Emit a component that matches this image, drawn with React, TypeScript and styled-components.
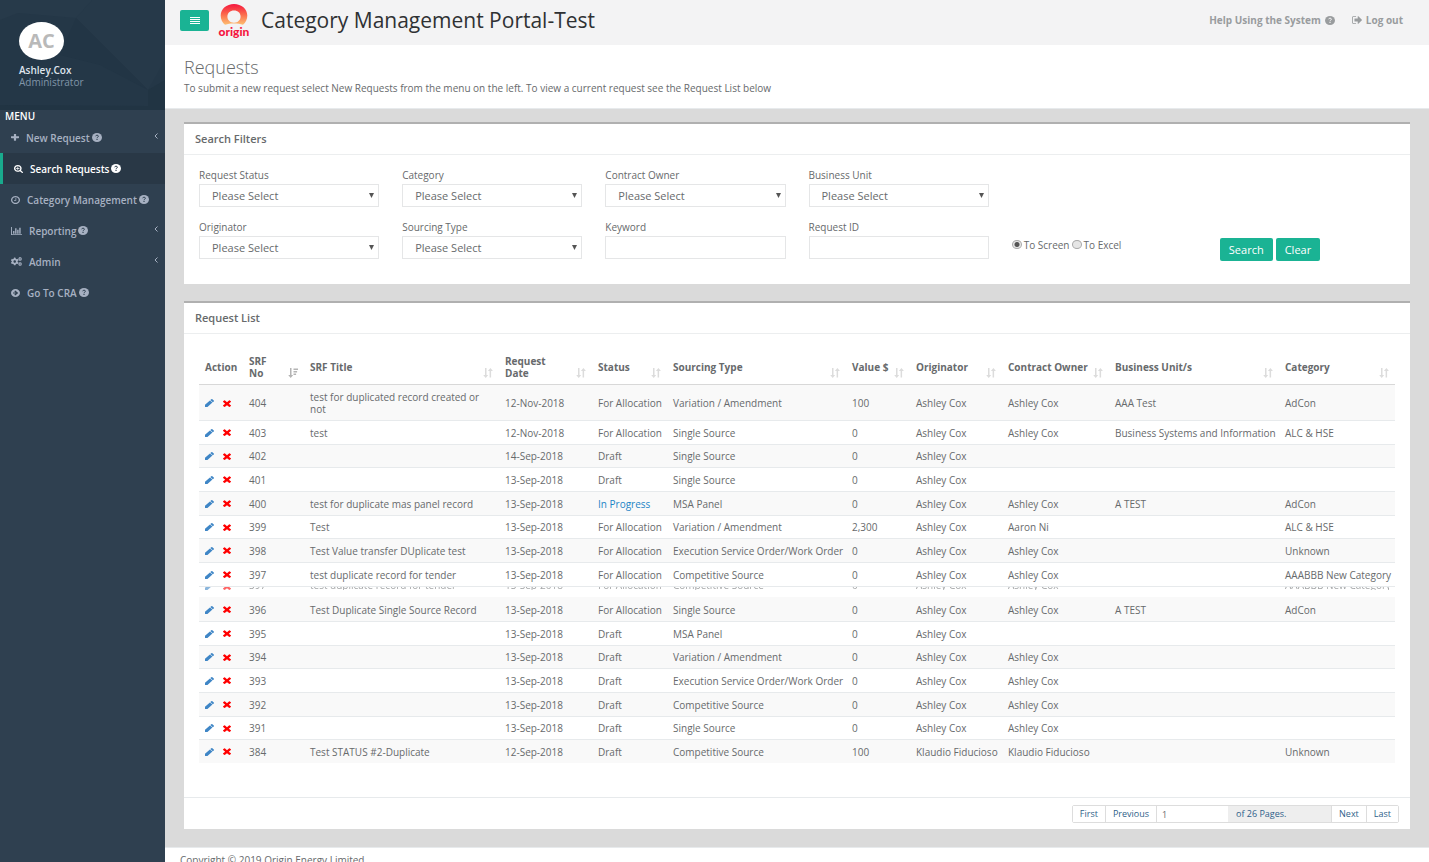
import React from "react";
import styled, { createGlobalStyle, css } from "styled-components";
import { FaCogs } from "react-icons/fa";

const GlobalStyle = createGlobalStyle`
  *, *::before, *::after { box-sizing: border-box; }
  html, body { margin: 0; padding: 0; }
  body {
    font-family: "Open Sans", "Liberation Sans", sans-serif;
    font-size: 11px;
    line-height: 12px;
    color: #676a6c;
    background: #2f4050;
  }
  button, input, select { font-family: inherit; color: inherit; margin: 0; }
  h1, h2, p, ul { margin: 0; padding: 0; }
  a { color: inherit; text-decoration: none; }
`;

/* ---------- icons ---------- */

const CIRCLE =
  "q0 209-103 385.500t-279.500 279.500-385.500 103-385.500-103-279.500-279.500-103-385.500 103-385.500 279.500-279.500 385.500-103 385.500 103 279.500 279.500 103 385.500z";

const paths = {
  plus: "M1600 736v192q0 40-28 68t-68 28h-416v416q0 40-28 68t-68 28h-192q-40 0-68-28t-28-68v-416h-416q-40 0-68-28t-28-68v-192q0-40 28-68t68-28h416v-416q0-40 28-68t68-28h192q40 0 68 28t28 68v416h416q40 0 68 28t28 68z",
  searchPlus:
    "M1088 800v64q0 13-9.500 22.500t-22.500 9.500h-224v224q0 13-9.500 22.500t-22.500 9.500h-64q-13 0-22.500-9.500t-9.500-22.500v-224h-224q-13 0-22.500-9.500t-9.500-22.500v-64q0-13 9.500-22.500t22.500-9.500h224v-224q0-13 9.500-22.500t22.500-9.500h64q13 0 22.500 9.500t9.500 22.500v224h224q13 0 22.500 9.500t9.500 22.500zm128 32q0-185-131.500-316.500t-316.500-131.500-316.500 131.500-131.500 316.500 131.500 316.500 316.500 131.500 316.500-131.500 131.500-316.500zm512 832q0 53-37.500 90.500t-90.500 37.500q-54 0-90-38l-343-342q-179 124-399 124-143 0-273.500-55.500t-225-150-150-225-55.500-273.500 55.500-273.500 150-225 225-150 273.500-55.500 273.500 55.500 225 150 150 225 55.500 273.500q0 220-124 399l343 343q37 37 37 90z",
  clock:
    "M1024 544v448q0 14-9 23t-23 9h-320q-14 0-23-9t-9-23v-64q0-14 9-23t23-9h224v-352q0-14 9-23t23-9h64q14 0 23 9t9 23zm416 352q0-148-73-273t-198-198-273-73-273 73-198 198-73 273 73 273 198 198 273 73 273-73 198-198 73-273zm224 0" +
    CIRCLE,
  chart:
    "M640 896v512h-256v-512h256zm384-512v1024h-256v-1024h256zm1024 1128v152h-2048v-1536h170v1384h1878zm-640-872v768h-256v-768h256zm384-384v1152h-256v-1152h256z",
  signOut:
    "M704 1440q0 4 1 20t.5 26.500-3 23.500-10 19.500-20.500 6.500h-320q-119 0-203.500-84.500t-84.500-203.500v-704q0-119 84.500-203.500t203.500-84.500h320q13 0 22.500 9.500t9.500 22.500q0 4 1 20t.5 26.500-3 23.500-10 19.500-20.500 6.500h-320q-66 0-113 47t-47 113v704q0 66 47 113t113 47h312l11.500 1 11.500 3 8 5.500 7 9 2 13.500zm928-544q0 26-19 45l-544 544q-19 19-45 19t-45-19-19-45v-288h-448q-26 0-45-19t-19-45v-384q0-26 19-45t45-19h448v-288q0-26 19-45t45-19 45 19l544 544q19 19 19 45z",
  pencil:
    "M960 416l416 416-832 832h-416v-416zm683 96q0 53-37 90l-166 166-416-416 166-165q36-38 90-38 53 0 91 38l235 234q37 39 37 91z",
  times:
    "M1490 1322q0 40-28 68l-136 136q-28 28-68 28t-68-28l-294-294-294 294q-28 28-68 28t-68-28l-136-136q-28-28-28-68t28-68l294-294-294-294q-28-28-28-68t28-68l136-136q28-28 68-28t68 28l294 294 294-294q28-28 68-28t68 28l136 136q28 28 28 68t-28 68l-294 294 294 294q28 28 28 68z",
};

type IconName = keyof typeof paths;

const viewBoxes: Record<IconName, string> = {
  chart: "0 128 2048 1536",
  clock: "128 128 1536 1536",
  plus: "192 192 1408 1408",
  searchPlus: "64 128 1664 1664",
  signOut: "64 256 1568 1280",
  pencil: "128 149 1515 1515",
  times: "302 302 1188 1252",
};

const Svg = styled.svg`
  display: block;
  flex: none;
  fill: currentColor;
`;

function Icon({ name, w, h }: { name: IconName; w: number; h: number }) {
  return (
    <Svg width={w} height={h} viewBox={viewBoxes[name]} preserveAspectRatio="none" aria-hidden="true">
      <path d={paths[name]} />
    </Svg>
  );
}

function HelpIcon() {
  return (
    <Svg width={10} height={9} viewBox="0 0 20 18" aria-hidden="true">
      <mask id="help-mark">
        <rect width="20" height="18" fill="#fff" />
        <path d="M7.200 6.500Q8 4.300 10.100 4.300Q12.800 4.500 12.700 6.600Q12.500 8.200 10.800 8.900Q10 9.400 10 10.600" fill="none" stroke="#000" strokeWidth="2" />
        <path d="M8.900 12h2.300v2.200H8.900z" fill="#000" />
      </mask>
      <ellipse cx="10" cy="9" rx="10" ry="9" mask="url(#help-mark)" />
    </Svg>
  );
}

function GoIcon() {
  return (
    <Svg width={9} height={8} viewBox="0 0 18 16" preserveAspectRatio="none" aria-hidden="true">
      <path
        fillRule="evenodd"
        d="M9 0a9 8 0 1 0 0 16a9 8 0 1 0 0-16zM8.500 3l6 5-6 5-2-1.700 2.600-2.200H4V6.900h5.100L6.500 4.700z"
      />
    </Svg>
  );
}

function BarsIcon() {
  return (
    <Svg width={10} height={7} viewBox="0 0 10 7" aria-hidden="true">
      <path d="M0 0h10v1H0zM0 2h10v1H0zM0 4h10v1H0zM0 6h10v1H0z" />
    </Svg>
  );
}

function Chevron() {
  return (
    <Svg width={4} height={6} viewBox="0 0 4 6" aria-hidden="true">
      <path d="M3.500.5L1 3l2.500 2.500" fill="none" stroke="currentColor" strokeWidth="1" />
    </Svg>
  );
}

function SortIcon({ active }: { active?: boolean }) {
  return (
    <Svg width={10} height={10} viewBox="0 0 10 10" aria-hidden="true">
      <path d="M2 0h1.500v7H5.200L2.700 10 .2 7H2z" />
      {active ? (
        <path d="M5.500.5h4.500v1.500H5.500zM5.500 3h3.600v1.500H5.500zM5.500 5.500h2.600v1.500H5.500z" />
      ) : (
        <path d="M6.600 9.500V3H4.900L7.400 0l2.500 3H8.100v6.500z" />
      )}
    </Svg>
  );
}

/* ---------- shell ---------- */

const Shell = styled.div`
  display: grid;
  grid-template-columns: 165px minmax(0, 1fr);
  height: 100vh;
  overflow: hidden;
`;

const Sidebar = styled.nav`
  background: #2f4050;
  color: #a7b1c2;
`;

const Profile = styled.div`
  position: relative;
  height: 110px;
  padding: 22px 19px 0;
  background: #243747;
`;

const Facets = styled.svg`
  position: absolute;
  inset: 0;
  width: 100%;
  height: 100%;
`;

const ProfileBody = styled.div`
  position: relative;
  line-height: 12px;
`;

const Avatar = styled.div`
  display: flex;
  align-items: center;
  justify-content: center;
  width: 45px;
  height: 38px;
  margin-bottom: 4px;
  border-radius: 50%;
  background: #fff;
  color: #b9b9b9;
  font-size: 20px;
  font-weight: 700;
`;

const UserName = styled.div`
  color: #dfe4ed;
  font-size: 10px;
  font-weight: 600;
`;

const UserRole = styled.div`
  color: #8095a8;
  font-size: 10px;
`;

const MenuTitle = styled.div`
  padding-left: 5px;
  color: #fff;
  font-size: 10px;
  font-weight: 600;
`;

const MenuList = styled.ul`
  list-style: none;
`;

const MenuLink = styled.a<{ $active?: boolean }>`
  display: flex;
  align-items: center;
  height: 31px;
  padding: 0 7px 0 11px;
  font-size: 10px;
  font-weight: 600;
  white-space: nowrap;
  ${(p) =>
    p.$active &&
    css`
      border-left: 3px solid #19aa8d;
      background: #293846;
      color: #fff;
    `}
`;

const MenuText = styled.span`
  margin: 0 2px 0 7px;
`;

const MenuArrow = styled.span`
  margin-left: auto;
  padding-bottom: 3px;
`;

const Page = styled.div`
  display: flex;
  flex-direction: column;
  min-width: 0;
  background: #dadada;
`;

const TopBar = styled.header`
  display: flex;
  align-items: center;
  height: 45px;
  padding: 0 26px 5px 15px;
  background: #f3f3f4;
`;

const MenuToggle = styled.button`
  display: flex;
  align-items: center;
  justify-content: center;
  width: 29px;
  height: 21px;
  padding: 0;
  border: 0;
  border-radius: 2px;
  background: #1ab394;
  color: #fff;
`;

const Logo = styled.svg`
  width: 34px;
  height: 38px;
  margin: 4px 10px 0 8px;
`;

const AppTitle = styled.h1`
  color: #2f3133;
  font-size: 21px;
  font-weight: 400;
  line-height: 28px;
  white-space: nowrap;
`;

const TopLinks = styled.div`
  display: flex;
  gap: 17px;
  margin-left: auto;
  color: #999c9e;
  font-size: 10px;
  font-weight: 700;
`;

const TopLink = styled.a`
  display: flex;
  align-items: center;
  gap: 4px;
  white-space: nowrap;
`;

const Heading = styled.section`
  height: 64px;
  padding: 10px 19px 0;
  border-bottom: 1px solid #e7eaec;
  background: #fff;
`;

const HeadingTitle = styled.h2`
  font-size: 18px;
  font-weight: 300;
  line-height: 24px;
`;

const HeadingText = styled.p`
  margin-top: 3px;
  font-size: 10px;
`;

const Content = styled.main`
  display: flex;
  flex-direction: column;
  gap: 17px;
  padding: 13px 19px 18px;
`;

const Panel = styled.section`
  border-top: 2px solid #b0b0b0;
  background: #fff;
`;

const PanelTitle = styled.h2`
  padding: 9px 11px;
  border-bottom: 1px solid #eceeef;
  font-size: 11px;
  font-weight: 600;
  line-height: 12px;
`;

/* ---------- filters ---------- */

const Filters = styled.form`
  display: grid;
  grid-template-columns: repeat(6, minmax(0, 1fr));
  gap: 13px 23px;
  padding: 13px 15px 23px;
`;

const Field = styled.div`
  display: flex;
  flex-direction: column;
  gap: 2px;
  font-size: 10px;
  line-height: 14px;
`;

const controlCss = css`
  width: 100%;
  height: 23px;
  padding: 0 12px;
  border: 1px solid #e5e6e7;
  border-radius: 0;
  background: #fff;
  font-size: 11px;
`;

const TextInput = styled.input`
  ${controlCss}
`;

const SelectBox = styled.div`
  position: relative;
`;

const Select = styled.select`
  ${controlCss}
  appearance: none;
  display: block;
`;

const SelectArrow = styled.svg`
  position: absolute;
  top: 9px;
  right: 5px;
  pointer-events: none;
`;

const Outputs = styled.div`
  display: flex;
  align-items: center;
  gap: 2px;
  padding-top: 8px;
  font-size: 10px;
  white-space: nowrap;
`;

const Radio = styled.input`
  appearance: none;
  flex: none;
  width: 10px;
  height: 9px;
  border: 1px solid #a9a9a9;
  border-radius: 50%;
  background: #e6e6e6;
  &:checked {
    background: radial-gradient(circle, #555 0 2px, #e6e6e6 3px);
  }
`;

const Actions = styled.div`
  display: flex;
  align-items: flex-end;
  gap: 3px;
  height: 41px;
  padding-left: 5px;
`;

const ActionButton = styled.button`
  height: 23px;
  padding: 0 9px;
  border: 0;
  border-radius: 2px;
  background: #1ab394;
  color: #fff;
  font-size: 11px;
`;

/* ---------- table ---------- */

const TableArea = styled.div`
  padding: 16px 15px 34px;
`;

const Table = styled.table`
  width: 100%;
  table-layout: fixed;
  border-collapse: separate;
  border-spacing: 0;
  font-size: 10px;
  line-height: 12px;
`;

const Th = styled.th`
  position: relative;
  height: 35px;
  padding: 0 6px;
  border-bottom: 1px solid #d8d8d8;
  text-align: left;
  font-weight: 700;
`;

const ThText = styled.span<{ $wrap?: boolean }>`
  display: block;
  width: ${(p) => (p.$wrap ? "min-content" : "auto")};
  white-space: ${(p) => (p.$wrap ? "normal" : "nowrap")};
`;

const SortMark = styled.span<{ $active?: boolean }>`
  position: absolute;
  right: 6px;
  bottom: 6px;
  color: ${(p) => (p.$active ? "#b4b4b4" : "#dcdcdc")};
`;

const Row = styled.tr`
  height: 24px;
  &:nth-child(odd) {
    background: #f9f9f9;
  }
  &:nth-child(3n) {
    height: 23px;
  }
`;

const Td = styled.td`
  padding: 0 6px;
  border-top: 1px solid #e7eaec;
  white-space: nowrap;
  ${Row}:first-child & {
    border-top-color: transparent;
  }
`;

const TitleTd = styled(Td)`
  padding: 5px 6px;
  white-space: normal;
`;

const RowActions = styled.div`
  display: flex;
  align-items: center;
  gap: 9px;
`;

const IconButton = styled.button<{ $danger?: boolean }>`
  padding: 0;
  border: 0;
  background: none;
  color: ${(p) => (p.$danger ? "#ff0000" : "#3f86c6")};
`;

const StatusLink = styled.a`
  color: #1c84c6;
`;

const SliverRow = styled.tr`
  height: 11px;
  vertical-align: top;
`;

const SliverTd = styled.td`
  padding: 0 6px 7px;
  border-top: 1px solid #e7eaec;
  white-space: nowrap;
`;

const Sliver = styled.div`
  display: flex;
  align-items: flex-end;
  height: 3px;
  overflow: hidden;
  line-height: 9px;
  opacity: 0.6;
`;

/* ---------- pager and footer ---------- */

const PagerBar = styled.div`
  display: flex;
  justify-content: flex-end;
  padding: 7px 11px 6px;
  border-top: 1px solid #e7eaec;
`;

const Pager = styled.div`
  display: flex;
  height: 18px;
  border: 1px solid #ddd;
  border-radius: 2px;
  color: #2f5f8a;
  font-size: 9px;
`;

const PagerButton = styled.button`
  padding: 0 7px;
  border: 0;
  border-right: 1px solid #ddd;
  background: #fff;
  color: inherit;
  font-size: 9px;
  line-height: 16px;
  &:last-child {
    border-right: 0;
  }
`;

const PagerInput = styled.input`
  width: 71px;
  padding: 0 5px;
  border: 0;
  color: #676a6c;
  font-size: 9px;
`;

const PagerTotal = styled.span`
  width: 104px;
  padding: 2px 8px;
  border-right: 1px solid #ddd;
  background: #eee;
`;

const Footer = styled.footer`
  flex: 1 0 auto;
  padding: 6px 15px;
  border-top: 1px solid #e7eaec;
  background: #fff;
  font-size: 10px;
  white-space: nowrap;
`;

/* ---------- data ---------- */

type Column = { label: string; width: number; wrap?: boolean; sort?: "none" | "desc" };

const columns: Column[] = [
  { label: "Action", width: 44 },
  { label: "SRF No", width: 61, wrap: true, sort: "desc" },
  { label: "SRF Title", width: 195, sort: "none" },
  { label: "Request Date", width: 93, wrap: true, sort: "none" },
  { label: "Status", width: 75, sort: "none" },
  { label: "Sourcing Type", width: 179, sort: "none" },
  { label: "Value $", width: 64, sort: "none" },
  { label: "Originator", width: 92, sort: "none" },
  { label: "Contract Owner", width: 107, sort: "none" },
  { label: "Business Unit/s", width: 170, sort: "none" },
  { label: "Category", width: 116, sort: "none" },
];

type Request = [string, string, string, string, string, string, string, string, string, string];

const A = "Ashley Cox";
const K = "Klaudio Fiducioso";

const firstRows: Request[] = [
  ["404", "test for duplicated record created or not", "12-Nov-2018", "For Allocation", "Variation / Amendment", "100", A, A, "AAA Test", "AdCon"],
  ["403", "test", "12-Nov-2018", "For Allocation", "Single Source", "0", A, A, "Business Systems and Information", "ALC & HSE"],
  ["402", "", "14-Sep-2018", "Draft", "Single Source", "0", A, "", "", ""],
  ["401", "", "13-Sep-2018", "Draft", "Single Source", "0", A, "", "", ""],
  ["400", "test for duplicate mas panel record", "13-Sep-2018", "In Progress", "MSA Panel", "0", A, A, "A TEST", "AdCon"],
  ["399", "Test", "13-Sep-2018", "For Allocation", "Variation / Amendment", "2,300", A, "Aaron Ni", "", "ALC & HSE"],
  ["398", "Test Value transfer DUplicate test", "13-Sep-2018", "For Allocation", "Execution Service Order/Work Order", "0", A, A, "", "Unknown"],
  ["397", "test duplicate record for tender", "13-Sep-2018", "For Allocation", "Competitive Source", "0", A, A, "", "AAABBB New Category"],
];

const lastRows: Request[] = [
  ["396", "Test Duplicate Single Source Record", "13-Sep-2018", "For Allocation", "Single Source", "0", A, A, "A TEST", "AdCon"],
  ["395", "", "13-Sep-2018", "Draft", "MSA Panel", "0", A, "", "", ""],
  ["394", "", "13-Sep-2018", "Draft", "Variation / Amendment", "0", A, A, "", ""],
  ["393", "", "13-Sep-2018", "Draft", "Execution Service Order/Work Order", "0", A, A, "", ""],
  ["392", "", "13-Sep-2018", "Draft", "Competitive Source", "0", A, A, "", ""],
  ["391", "", "13-Sep-2018", "Draft", "Single Source", "0", A, A, "", ""],
  ["384", "Test STATUS #2-Duplicate", "12-Sep-2018", "Draft", "Competitive Source", "100", K, K, "", "Unknown"],
];

function RequestRow({ row }: { row: Request }) {
  return (
    <Row>
      <Td>
        <RowActions>
          <IconButton type="button" aria-label={`Edit ${row[0]}`}>
            <Icon name="pencil" w={9} h={8} />
          </IconButton>
          <IconButton type="button" $danger aria-label={`Delete ${row[0]}`}>
            <Icon name="times" w={8} h={7} />
          </IconButton>
        </RowActions>
      </Td>
      {row.map((value, i) => {
        if (i === 1) return <TitleTd key={i}>{value}</TitleTd>;
        return <Td key={i}>{value === "In Progress" ? <StatusLink href="#status">{value}</StatusLink> : value}</Td>;
      })}
    </Row>
  );
}

function SliceRow({ row }: { row: Request }) {
  return (
    <SliverRow aria-hidden="true">
      <SliverTd>
        <Sliver>
          <RowActions>
            <IconButton as="span">
              <Icon name="pencil" w={9} h={8} />
            </IconButton>
            <IconButton as="span" $danger>
              <Icon name="times" w={8} h={7} />
            </IconButton>
          </RowActions>
        </Sliver>
      </SliverTd>
      {row.map((value, i) => (
        <SliverTd key={i}>
          <Sliver>{value}</Sliver>
        </SliverTd>
      ))}
    </SliverRow>
  );
}

function SelectField({ id, label }: { id: string; label: string }) {
  return (
    <Field>
      <label htmlFor={id}>{label}</label>
      <SelectBox>
        <Select id={id} defaultValue="">
          <option value="">Please Select</option>
        </Select>
        <SelectArrow width="5" height="5" viewBox="0 0 5 5" aria-hidden="true">
          <path d="M0 0h5L2.500 5z" fill="#555" />
        </SelectArrow>
      </SelectBox>
    </Field>
  );
}

function InputField({ id, label }: { id: string; label: string }) {
  return (
    <Field>
      <label htmlFor={id}>{label}</label>
      <TextInput id={id} type="text" />
    </Field>
  );
}

function OriginLogo() {
  return (
    <Logo viewBox="0 0 34 38" role="img" aria-label="origin">
      <defs>
        <linearGradient id="sun" x1="0" y1="0" x2="0" y2="1">
          <stop offset="0" stopColor="#f5163f" />
          <stop offset="0.5" stopColor="#fb6a4c" />
          <stop offset="1" stopColor="#fdc072" />
        </linearGradient>
      </defs>
      <path
        fill="url(#sun)"
        fillRule="evenodd"
        d="M17 1C9.500 1 3.700 6 3.700 12.500c0 3.800 1.600 7 4.300 9.300 2.700-1 5.600-1.300 9-1.300s6.300.300 9 1.300c2.700-2.300 4.300-5.500 4.300-9.300C30.300 6 24.500 1 17 1zm0 6.500c3.900 0 6.600 2.600 6.600 6S20.900 19.700 17 19.700s-6.600-2.800-6.600-6.200 2.700-6 6.600-6z"
      />
      <text x="17" y="33" textAnchor="middle" fontFamily="Lato, sans-serif" fontSize="12" fontWeight="900" fill="#f5163f">
        origin
      </text>
    </Logo>
  );
}

const menu: { label: string; icon: React.ReactNode; help?: boolean; arrow?: boolean; active?: boolean }[] = [
  { label: "New Request", icon: <Icon name="plus" w={8} h={7} />, help: true, arrow: true },
  { label: "Search Requests", icon: <Icon name="searchPlus" w={9} h={8} />, help: true, active: true },
  { label: "Category Management", icon: <Icon name="clock" w={9} h={8} />, help: true },
  { label: "Reporting", icon: <Icon name="chart" w={11} h={8} />, help: true, arrow: true },
  { label: "Admin", icon: <FaCogs size={11} />, arrow: true },
  { label: "Go To CRA", icon: <GoIcon />, help: true },
];

export default function App() {
  return (
    <>
      <GlobalStyle />
      <Shell>
        <Sidebar>
          <Profile>
            <Facets viewBox="0 0 165 110" preserveAspectRatio="none" aria-hidden="true">
              <path d="M0 0h92L76 18 18 13 0 20z" fill="#273a4a" />
              <path d="M92 0h73v60l-17 30L76 18z" fill="#263949" />
              <path d="M76 18l72 72-48-25-40-10z" fill="#223545" />
              <path d="M0 105l148 1V90l17-10v30H0z" fill="#213443" />
            </Facets>
            <ProfileBody>
              <Avatar>AC</Avatar>
              <UserName>Ashley.Cox</UserName>
              <UserRole>Administrator</UserRole>
            </ProfileBody>
          </Profile>
          <MenuTitle>MENU</MenuTitle>
          <MenuList>
            {menu.map((item) => (
              <li key={item.label}>
                <MenuLink href="#menu" $active={item.active}>
                  {item.icon}
                  <MenuText>{item.label}</MenuText>
                  {item.help && <HelpIcon />}
                  {item.arrow && (
                    <MenuArrow>
                      <Chevron />
                    </MenuArrow>
                  )}
                </MenuLink>
              </li>
            ))}
          </MenuList>
        </Sidebar>
        <Page>
          <TopBar>
            <MenuToggle type="button" aria-label="Toggle menu">
              <BarsIcon />
            </MenuToggle>
            <OriginLogo />
            <AppTitle>Category Management Portal-Test</AppTitle>
            <TopLinks>
              <TopLink href="#help">
                Help Using the System
                <HelpIcon />
              </TopLink>
              <TopLink href="#logout">
                <Icon name="signOut" w={10} h={8} />
                Log out
              </TopLink>
            </TopLinks>
          </TopBar>
          <Heading>
            <HeadingTitle>Requests</HeadingTitle>
            <HeadingText>
              To submit a new request select New Requests from the menu on the left. To view a current request see the Request List
              below
            </HeadingText>
          </Heading>
          <Content>
            <Panel>
              <PanelTitle>Search Filters</PanelTitle>
              <Filters onSubmit={(e) => e.preventDefault()}>
                <SelectField id="status" label="Request Status" />
                <SelectField id="category" label="Category" />
                <SelectField id="owner" label="Contract Owner" />
                <SelectField id="unit" label="Business Unit" />
                <span />
                <span />
                <SelectField id="originator" label="Originator" />
                <SelectField id="sourcing" label="Sourcing Type" />
                <InputField id="keyword" label="Keyword" />
                <InputField id="request-id" label="Request ID" />
                <Outputs>
                  <Radio type="radio" name="output" id="to-screen" defaultChecked />
                  <label htmlFor="to-screen">To Screen</label>
                  <Radio type="radio" name="output" id="to-excel" />
                  <label htmlFor="to-excel">To Excel</label>
                </Outputs>
                <Actions>
                  <ActionButton type="submit">Search</ActionButton>
                  <ActionButton type="reset">Clear</ActionButton>
                </Actions>
              </Filters>
            </Panel>
            <Panel>
              <PanelTitle>Request List</PanelTitle>
              <TableArea>
                <Table>
                  <colgroup>
                    {columns.map((c) => (
                      <col key={c.label} width={c.width} />
                    ))}
                  </colgroup>
                  <thead>
                    <tr>
                      {columns.map((c) => (
                        <Th key={c.label} scope="col">
                          <ThText $wrap={c.wrap}>{c.label}</ThText>
                          {c.sort && (
                            <SortMark $active={c.sort === "desc"}>
                              <SortIcon active={c.sort === "desc"} />
                            </SortMark>
                          )}
                        </Th>
                      ))}
                    </tr>
                  </thead>
                  <tbody>
                    {firstRows.map((row) => (
                      <RequestRow key={row[0]} row={row} />
                    ))}
                    <SliceRow row={firstRows[7]} />
                  </tbody>
                  <tbody>
                    {lastRows.map((row) => (
                      <RequestRow key={row[0]} row={row} />
                    ))}
                  </tbody>
                </Table>
              </TableArea>
              <PagerBar>
                <Pager>
                  <PagerButton type="button">First</PagerButton>
                  <PagerButton type="button">Previous</PagerButton>
                  <PagerInput type="text" aria-label="Page" defaultValue="1" />
                  <PagerTotal>of 26 Pages.</PagerTotal>
                  <PagerButton type="button">Next</PagerButton>
                  <PagerButton type="button">Last</PagerButton>
                </Pager>
              </PagerBar>
            </Panel>
          </Content>
          <Footer>Copyright © 2019 Origin Energy Limited</Footer>
        </Page>
      </Shell>
    </>
  );
}
